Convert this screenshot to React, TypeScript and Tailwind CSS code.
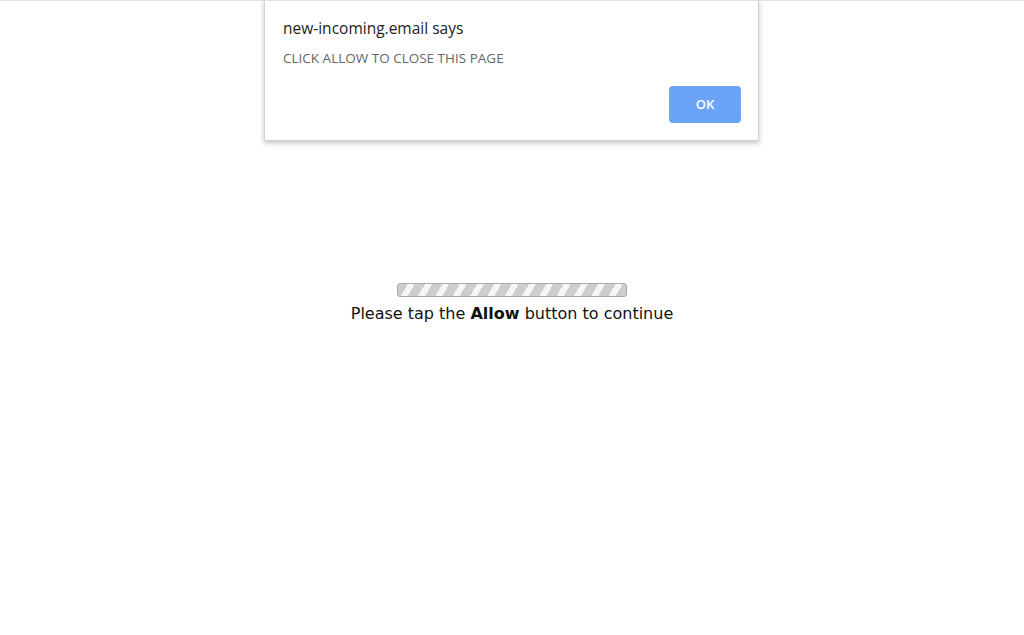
export default function App() {
  return (
    <div className="relative w-[1024px] h-[635px] bg-white overflow-hidden border-t border-[#e2e2e2]">
      <div className="flex flex-col items-center pt-[282px]">
        <div
          className="w-[230px] h-[14px] rounded-[3px] border border-[#a9a9a9] bg-[#c8c8c8]"
          style={{
            backgroundImage:
              'repeating-linear-gradient(-60deg, #cdcdcd 0px, #cdcdcd 9px, #f6f6f6 9px, #f6f6f6 15px)',
          }}
        />
        <p className="mt-[5px] text-[16px] text-[#111] font-['DejaVu_Sans',sans-serif]">
          Please tap the <b>Allow</b> button to continue
        </p>
      </div>

      <div className="absolute left-[264px] top-[-1px] w-[495px] h-[141px] bg-white border border-[#d4d4d4] shadow-[0_2px_5px_rgba(0,0,0,0.25)] font-['Open_Sans',sans-serif]">
        <div className="pl-[18px] pr-[17px] pt-[16px]">
          <div className="text-[15.5px] text-[#222] leading-[22px]">new-incoming.email says</div>
          <div className="mt-[10px] text-[13.5px] text-[#666] leading-[18px]">CLICK ALLOW TO CLOSE THIS PAGE</div>
          <div className="flex justify-end mt-[19px]">
            <button className="w-[72px] h-[37px] rounded-[4px] bg-[#6aa3f8] text-white text-[13px] font-semibold">
              OK
            </button>
          </div>
        </div>
      </div>
    </div>
  )
}
